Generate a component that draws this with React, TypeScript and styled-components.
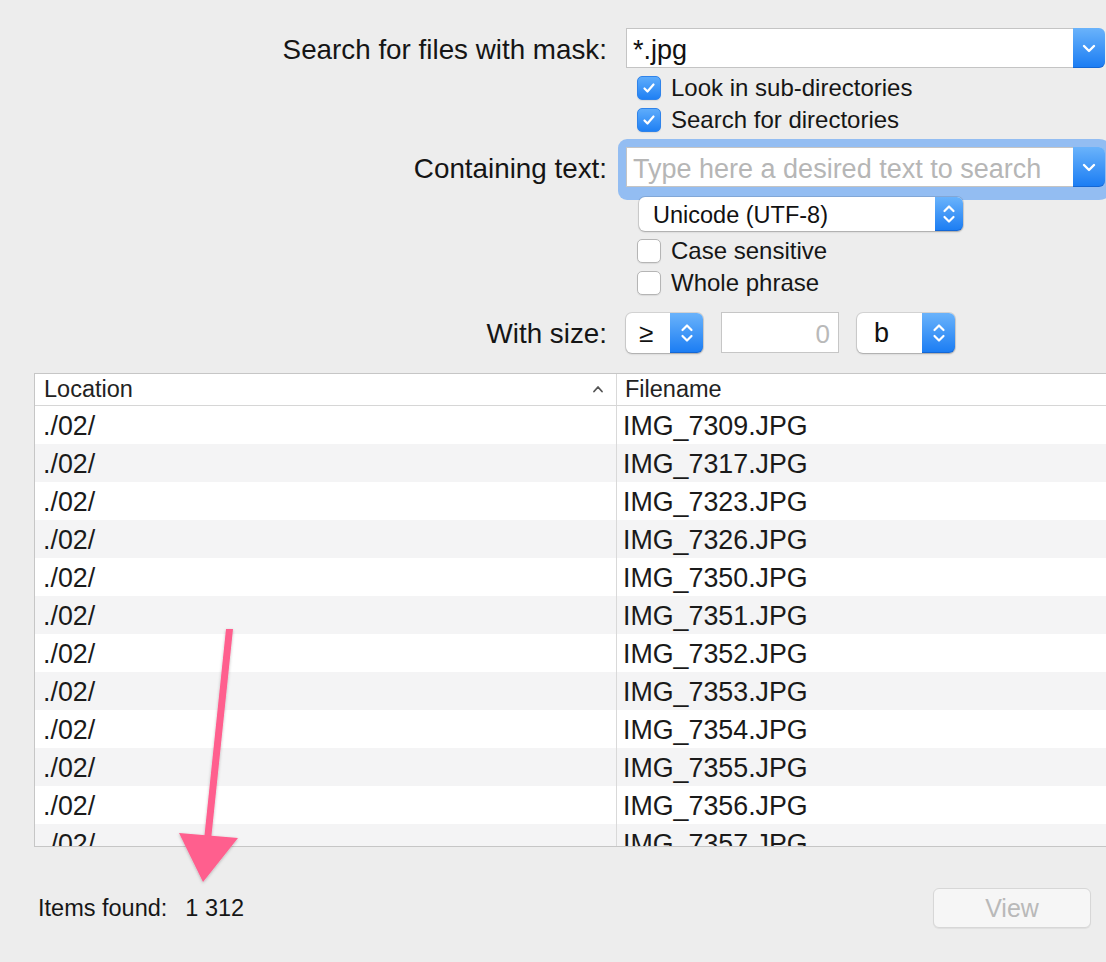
import React from "react";
import styled, { createGlobalStyle } from "styled-components";

const files = [
  "IMG_7309.JPG",
  "IMG_7317.JPG",
  "IMG_7323.JPG",
  "IMG_7326.JPG",
  "IMG_7350.JPG",
  "IMG_7351.JPG",
  "IMG_7352.JPG",
  "IMG_7353.JPG",
  "IMG_7354.JPG",
  "IMG_7355.JPG",
  "IMG_7356.JPG",
  "IMG_7357.JPG",
];

const GlobalStyle = createGlobalStyle`
  html, body {
    margin: 0;
    padding: 0;
    background: #ededed;
  }
  body {
    font-family: "Liberation Sans", Arial, sans-serif;
    color: #1a1a1a;
  }
`;

const Window = styled.div`
  position: relative;
  width: 1106px;
  height: 962px;
  overflow: hidden;
  background: #ededed;
  padding-top: 28px;
  box-sizing: border-box;
`;

const Row = styled.div<{ $top?: number; $height: number }>`
  display: flex;
  align-items: center;
  height: ${({ $height }) => $height}px;
  margin-top: ${({ $top }) => $top || 0}px;
`;

const Label = styled.div<{ $drop?: number }>`
  width: 607px;
  flex: none;
  margin-right: 19px;
  padding-top: ${({ $drop }) => $drop ?? 4}px;
  text-align: right;
  font-size: 27.8px;
  color: #151515;
`;

const Indent = styled.div<{ $left: number }>`
  display: flex;
  align-items: center;
  margin-left: ${({ $left }) => 626 + $left}px;
`;

const Combo = styled.div<{ $focused?: boolean }>`
  position: relative;
  display: flex;
  width: 479px;
  height: 40px;
  border-radius: 3px 6px 6px 3px;
  box-shadow: ${({ $focused }) =>
    $focused ? "0 0 0 8px #93bdf2, 0 5px 0 8px #93bdf2" : "none"};
`;

const ComboField = styled.div<{ $placeholder?: boolean }>`
  flex: 1;
  display: flex;
  align-items: center;
  background: #fff;
  border: 1px solid #c4c4c4;
  border-right: none;
  padding: 4px 0 0 6px;
  font-size: 27px;
  color: ${({ $placeholder }) => ($placeholder ? "#b6b6b6" : "#111")};
`;

const BlueButton = styled.div<{ $width: number }>`
  width: ${({ $width }) => $width}px;
  flex: none;
  display: flex;
  align-items: center;
  justify-content: center;
  border-radius: 0 6px 6px 0;
  background: linear-gradient(#6ab3fb, #1a7cf3);
  box-shadow: inset 0 -1px 0 rgba(0, 40, 120, 0.25);
`;

const Popup = styled.div<{ $width: number; $height: number }>`
  position: relative;
  z-index: 1;
  display: flex;
  width: ${({ $width }) => $width}px;
  height: ${({ $height }) => $height}px;
  border-radius: 6px;
  background: #fff;
  box-shadow: 0 0 0 1px rgba(0, 0, 0, 0.1), 0 1px 2px rgba(0, 0, 0, 0.22);
`;

const PopupText = styled.div<{ $pad: number; $size: number }>`
  flex: 1;
  display: flex;
  align-items: center;
  padding: 2px 0 0 ${({ $pad }) => $pad}px;
  font-size: ${({ $size }) => $size}px;
  color: #111;
`;

const NumberField = styled.div`
  width: 118px;
  height: 41px;
  box-sizing: border-box;
  margin: 0 18px;
  display: flex;
  align-items: center;
  justify-content: flex-end;
  padding: 3px 8px 0 0;
  background: #fff;
  border: 1px solid #c6c6c6;
  font-size: 26px;
  color: #b9b9b9;
`;

const Box = styled.div<{ $checked?: boolean }>`
  width: 24px;
  height: 24px;
  box-sizing: border-box;
  border-radius: 5px;
  display: flex;
  align-items: center;
  justify-content: center;
  background: ${({ $checked }) =>
    $checked ? "linear-gradient(#5eacfb, #1f80f4)" : "#fff"};
  border: 1px solid ${({ $checked }) => ($checked ? "#2f83ea" : "#b5b5b5")};
  box-shadow: 0 1px 1px rgba(0, 0, 0, 0.08);
`;

const CheckText = styled.span`
  margin-left: 10px;
  font-size: 24px;
  color: #161616;
`;

const Table = styled.div`
  margin-top: 20px;
  margin-left: 34px;
  width: 1100px;
  height: 474px;
  box-sizing: border-box;
  border: 1px solid #c6c6c6;
  border-right: none;
  background: #fff;
  overflow: hidden;
`;

const Header = styled.div`
  display: flex;
  height: 31px;
  border-bottom: 1px solid #d6d6d6;
  background: #fff;
`;

const HeadCell = styled.div<{ $width?: number }>`
  position: relative;
  display: flex;
  align-items: center;
  box-sizing: border-box;
  width: ${({ $width }) => ($width ? `${$width}px` : "auto")};
  flex: ${({ $width }) => ($width ? "none" : "1")};
  padding-left: ${({ $width }) => ($width ? 9 : 8)}px;
  font-size: 23.5px;
  color: #222;
  & + & {
    border-left: 1px solid #d9d9d9;
  }
`;

const SortMark = styled.svg`
  position: absolute;
  right: 12px;
  top: 11px;
`;

const Body = styled.div`
  height: 440px;
  overflow: hidden;
`;

const FileRow = styled.div<{ $odd: boolean }>`
  display: flex;
  height: 38px;
  background: ${({ $odd }) => ($odd ? "#f4f4f5" : "#fff")};
`;

const Cell = styled.div<{ $width?: number }>`
  display: flex;
  align-items: center;
  box-sizing: border-box;
  width: ${({ $width }) => ($width ? `${$width}px` : "auto")};
  flex: ${({ $width }) => ($width ? "none" : "1")};
  padding: 3px 0 0 ${({ $width }) => ($width ? 8 : 6)}px;
  font-size: 26.8px;
  color: #1a1a1a;
  & + & {
    border-left: 1px solid #d9d9d9;
  }
`;

const Footer = styled.div`
  display: flex;
  align-items: center;
  justify-content: space-between;
  height: 40px;
  margin-top: 41px;
  padding: 0 15px 0 38px;
`;

const Found = styled.div`
  font-size: 23.5px;
  color: #161616;
`;

const Count = styled.span`
  margin-left: 18px;
`;

const ViewButton = styled.button`
  width: 158px;
  height: 40px;
  border-radius: 6px;
  border: 1px solid #d7d7d7;
  background: #f6f6f6;
  color: #b9b9b9;
  font-family: "Liberation Sans", Arial, sans-serif;
  font-size: 25px;
  box-shadow: 0 1px 1px rgba(0, 0, 0, 0.06);
`;

const Overlay = styled.svg`
  position: absolute;
  left: 0;
  top: 0;
  pointer-events: none;
`;

const ChevronDown = () => (
  <svg width="14" height="9" viewBox="0 0 14 9">
    <path d="M2 2 L7 7 L12 2" fill="none" stroke="#fff" strokeWidth="2.4" strokeLinecap="round" strokeLinejoin="round" />
  </svg>
);

const Stepper = () => (
  <svg width="14" height="22" viewBox="0 0 14 22">
    <path d="M2.5 8 L7 3.5 L11.5 8" fill="none" stroke="#fff" strokeWidth="2.2" strokeLinecap="round" strokeLinejoin="round" />
    <path d="M2.5 14 L7 18.5 L11.5 14" fill="none" stroke="#fff" strokeWidth="2.2" strokeLinecap="round" strokeLinejoin="round" />
  </svg>
);

const Tick = () => (
  <svg width="14" height="12" viewBox="0 0 14 12">
    <path d="M2.5 6.5 L5.5 9.5 L11.5 2.5" fill="none" stroke="#fff" strokeWidth="2.2" strokeLinecap="round" strokeLinejoin="round" />
  </svg>
);

const Check: React.FC<{ checked?: boolean; label: string; top?: number }> = ({ checked, label, top }) => (
  <Row $height={32} $top={top}>
    <Indent $left={11}>
      <Box $checked={checked}>{checked && <Tick />}</Box>
      <CheckText>{label}</CheckText>
    </Indent>
  </Row>
);

const App: React.FC = () => {
  return (
    <Window>
      <GlobalStyle />
      <Row $height={40}>
        <Label>Search for files with mask:</Label>
        <Combo>
          <ComboField>*.jpg</ComboField>
          <BlueButton $width={32}>
            <ChevronDown />
          </BlueButton>
        </Combo>
      </Row>
      <Check checked label="Look in sub-directories" top={4} />
      <Check checked label="Search for directories" />
      <Row $height={40} $top={11}>
        <Label>Containing text:</Label>
        <Combo $focused>
          <ComboField $placeholder>Type here a desired text to search</ComboField>
          <BlueButton $width={32}>
            <ChevronDown />
          </BlueButton>
        </Combo>
      </Row>
      <Row $height={34} $top={10}>
        <Indent $left={13}>
          <Popup $width={324} $height={34}>
            <PopupText $pad={14} $size={23.5}>Unicode (UTF-8)</PopupText>
            <BlueButton $width={28}>
              <Stepper />
            </BlueButton>
          </Popup>
        </Indent>
      </Row>
      <Check label="Case sensitive" top={4} />
      <Check label="Whole phrase" />
      <Row $height={41} $top={13}>
        <Label $drop={3}>With size:</Label>
        <Popup $width={77} $height={40}>
          <PopupText $pad={13} $size={26}>≥</PopupText>
          <BlueButton $width={33}>
            <Stepper />
          </BlueButton>
        </Popup>
        <NumberField>0</NumberField>
        <Popup $width={98} $height={40}>
          <PopupText $pad={17} $size={27}>b</PopupText>
          <BlueButton $width={33}>
            <Stepper />
          </BlueButton>
        </Popup>
      </Row>
      <Table>
        <Header>
          <HeadCell $width={581}>
            Location
            <SortMark width="12" height="8" viewBox="0 0 12 8">
              <path d="M2 6.5 L6 2 L10 6.5" fill="none" stroke="#555" strokeWidth="1.8" strokeLinecap="round" strokeLinejoin="round" />
            </SortMark>
          </HeadCell>
          <HeadCell>Filename</HeadCell>
        </Header>
        <Body>
          {files.map((name, i) => (
            <FileRow key={name} $odd={i % 2 === 1}>
              <Cell $width={581}>./02/</Cell>
              <Cell>{name}</Cell>
            </FileRow>
          ))}
        </Body>
      </Table>
      <Footer>
        <Found>
          Items found:<Count>1 312</Count>
        </Found>
        <ViewButton disabled>View</ViewButton>
      </Footer>
      <Overlay width="1106" height="962" viewBox="0 0 1106 962">
        <defs>
          <filter id="arrowShadow" x="-20%" y="-20%" width="140%" height="140%">
            <feDropShadow dx="0" dy="1" stdDeviation="1.5" floodColor="#000" floodOpacity="0.25" />
          </filter>
        </defs>
        <g filter="url(#arrowShadow)" fill="#ff5e8e">
          <path d="M226 629 L233 629 L211 840 L204 840 Z" />
          <path d="M179 833 L238 838 L203 882 Z" />
        </g>
      </Overlay>
    </Window>
  );
};

export default App;
